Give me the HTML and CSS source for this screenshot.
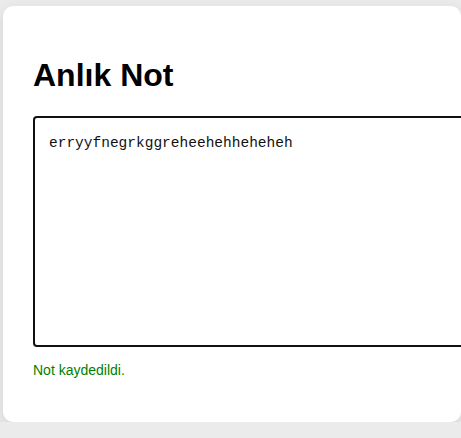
FILE: index.html
```html
<!DOCTYPE html>
<html lang="tr">
<head>
<meta charset="utf-8">
<title>Anlık Not</title>
<link rel="stylesheet" href="styles.css">
</head>
<body>
<div class="card">
  <h1 class="title">Anlık Not</h1>
  <textarea class="note" autofocus>erryyfnegrkggreheehehheheheh</textarea>
  <p class="status">Not kaydedildi.</p>
</div>
<script>
  var t = document.querySelector('.note');
  t.focus();
  t.setSelectionRange(t.value.length, t.value.length);
</script>
</body>
</html>
```
FILE: styles.css
```css
html, body {
  margin: 0;
  padding: 0;
  background: #ebebeb;
  overflow: hidden;
}
body {
  font-family: "Liberation Sans", Arial, sans-serif;
  padding: 6px 0 0 3px;
}
.card {
  box-sizing: border-box;
  width: 458px;
  height: 416px;
  background: #ffffff;
  border-radius: 10px;
  padding: 30px 30px 30px 30px;
  box-shadow: 0 4px 14px rgba(0, 0, 0, 0.1);
}
.title {
  font-size: 32px;
  font-weight: bold;
  margin: 21px 0 22px;
  line-height: 37px;
  color: #000;
}
.note {
  display: block;
  box-sizing: border-box;
  width: 460px;
  height: 231px;
  margin: 0;
  border: 2px solid #111;
  border-radius: 4px;
  padding: 16px 14px 13px;
  font-family: "Liberation Mono", "DejaVu Sans Mono", monospace;
  font-size: 14.5px;
  line-height: 18px;
  color: #111;
  caret-color: #000;
  resize: none;
  outline: none;
}
.status {
  margin: 15px 0 0;
  font-size: 14px;
  line-height: 16px;
  color: #008000;
}
```
